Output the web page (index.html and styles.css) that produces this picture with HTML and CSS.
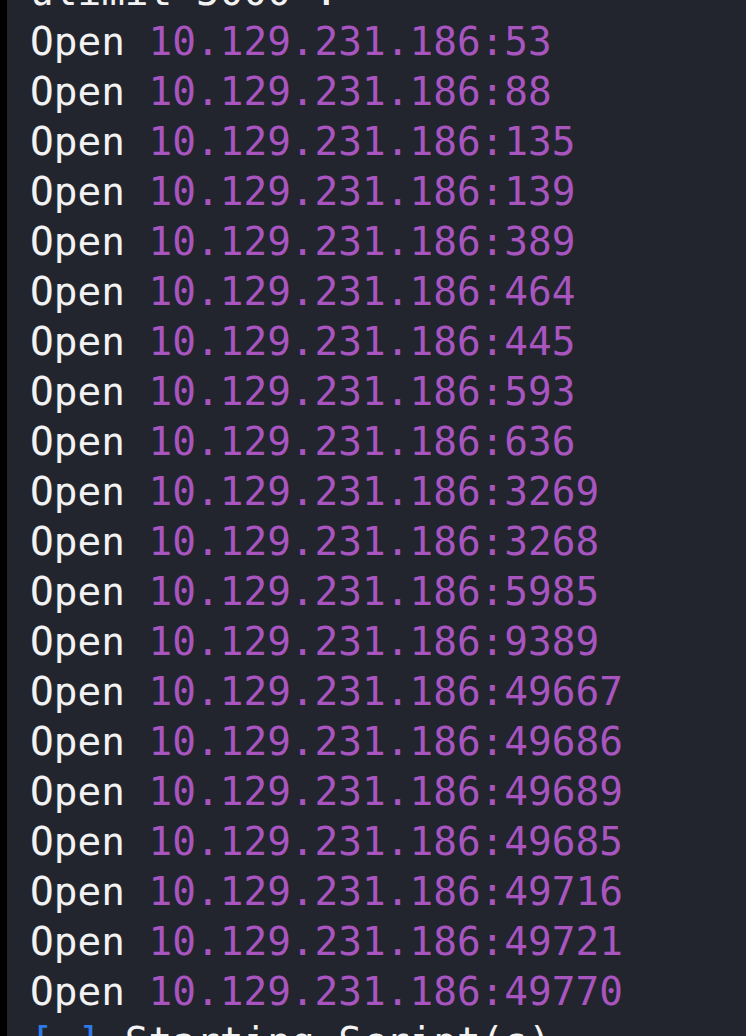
FILE: index.html
```html
<!DOCTYPE html>
<html>
<head>
<meta charset="utf-8">
<link rel="stylesheet" href="styles.css">
</head>
<body>
<div class="term">
  <div class="edge"></div>
  <div class="screen">
    <div class="out">
      <div class="line">ulimit 5000'.</div>
      <div class="line">Open <span class="ip">10.129.231.186:53</span></div>
      <div class="line">Open <span class="ip">10.129.231.186:88</span></div>
      <div class="line">Open <span class="ip">10.129.231.186:135</span></div>
      <div class="line">Open <span class="ip">10.129.231.186:139</span></div>
      <div class="line">Open <span class="ip">10.129.231.186:389</span></div>
      <div class="line">Open <span class="ip">10.129.231.186:464</span></div>
      <div class="line">Open <span class="ip">10.129.231.186:445</span></div>
      <div class="line">Open <span class="ip">10.129.231.186:593</span></div>
      <div class="line">Open <span class="ip">10.129.231.186:636</span></div>
      <div class="line">Open <span class="ip">10.129.231.186:3269</span></div>
      <div class="line">Open <span class="ip">10.129.231.186:3268</span></div>
      <div class="line">Open <span class="ip">10.129.231.186:5985</span></div>
      <div class="line">Open <span class="ip">10.129.231.186:9389</span></div>
      <div class="line">Open <span class="ip">10.129.231.186:49667</span></div>
      <div class="line">Open <span class="ip">10.129.231.186:49686</span></div>
      <div class="line">Open <span class="ip">10.129.231.186:49689</span></div>
      <div class="line">Open <span class="ip">10.129.231.186:49685</span></div>
      <div class="line">Open <span class="ip">10.129.231.186:49716</span></div>
      <div class="line">Open <span class="ip">10.129.231.186:49721</span></div>
      <div class="line">Open <span class="ip">10.129.231.186:49770</span></div>
      <div class="line"><span class="br">[~]</span> Starting Script(s)</div>
    </div>
  </div>
</div>
</body>
</html>
```

FILE: styles.css
```css
html, body {
  margin: 0;
  padding: 0;
  background: #22252e;
  overflow: hidden;
}
.term {
  display: flex;
  width: 746px;
  height: 1036px;
  overflow: hidden;
}
.edge {
  width: 7px;
  flex: none;
  background: #000;
}
.screen {
  flex: 1;
  background: #22252e;
  overflow: hidden;
  padding-left: 23px;
}
.out {
  margin-top: -34px;
  font-family: "DejaVu Sans Mono", monospace;
  font-size: 39.4px;
  line-height: 50px;
  color: #f2f2f2;
}
.line {
  white-space: pre;
  height: 50px;
}
.ip {
  color: #a855c0;
}
.br {
  color: #2d7bea;
}
```
